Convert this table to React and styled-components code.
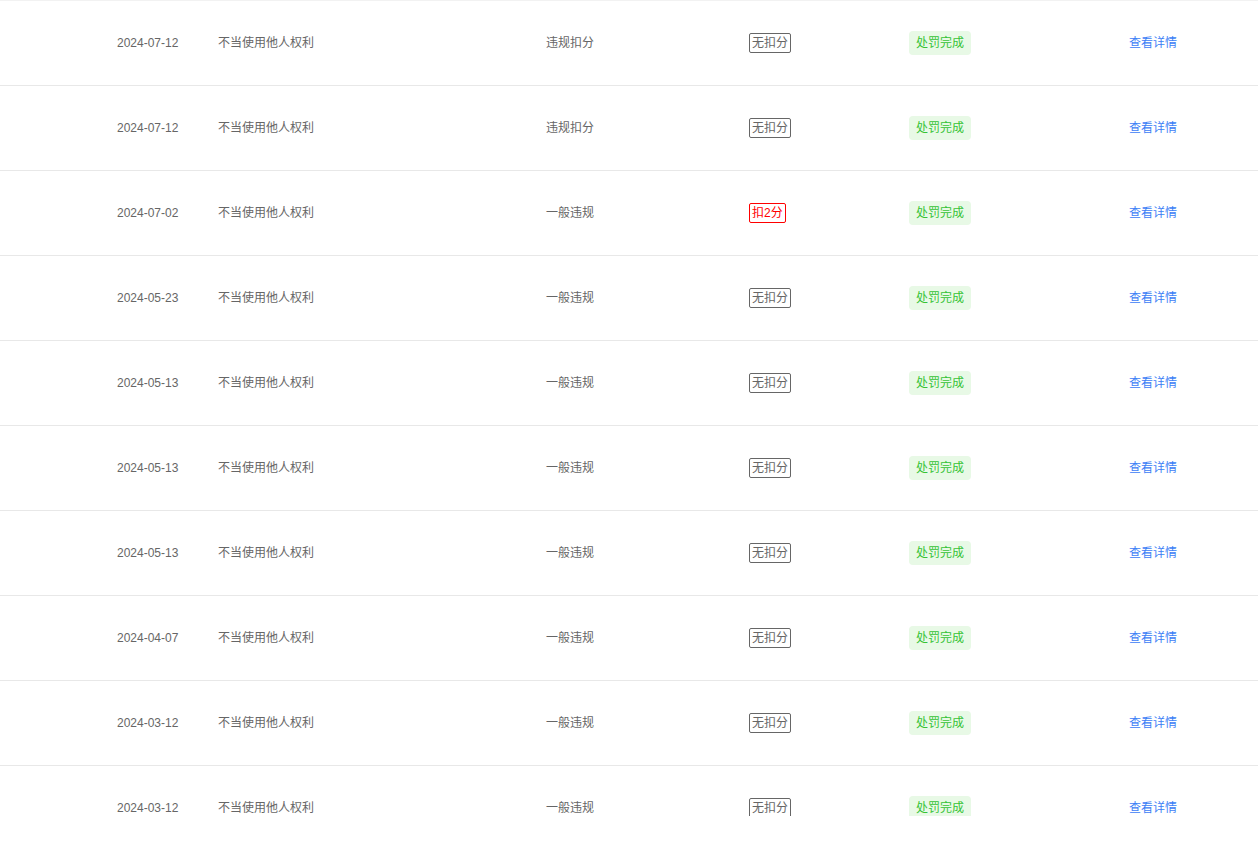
import React from "react";
import styled, { createGlobalStyle } from "styled-components";

const GlobalStyle = createGlobalStyle`
    html, body {
        margin: 0;
        padding: 0;
        background: #fff;
    }
    body {
        font-family: "Liberation Sans", "Noto Sans CJK SC", sans-serif;
        font-size: 12px;
        color: #666;
    }
`;

const records = [
    { date: "2024-07-12", type: "违规扣分", score: "无扣分" },
    { date: "2024-07-12", type: "违规扣分", score: "无扣分" },
    { date: "2024-07-02", type: "一般违规", score: "扣2分", deducted: true },
    { date: "2024-05-23", type: "一般违规", score: "无扣分" },
    { date: "2024-05-13", type: "一般违规", score: "无扣分" },
    { date: "2024-05-13", type: "一般违规", score: "无扣分" },
    { date: "2024-05-13", type: "一般违规", score: "无扣分" },
    { date: "2024-04-07", type: "一般违规", score: "无扣分" },
    { date: "2024-03-12", type: "一般违规", score: "无扣分" },
    { date: "2024-03-12", type: "一般违规", score: "无扣分" },
];

const App = () => {
    return (
        <>
            <GlobalStyle />
            <TableWrapper>
                {records.map((r, i) => (
                    <Row key={i}>
                        <Cell>{r.date}</Cell>
                        <Cell>不当使用他人权利</Cell>
                        <Cell>{r.type}</Cell>
                        <Cell>
                            <ScoreTag $deducted={r.deducted}>{r.score}</ScoreTag>
                        </Cell>
                        <Cell>
                            <StatusTag>处罚完成</StatusTag>
                        </Cell>
                        <Cell>
                            <DetailLink href="#">查看详情</DetailLink>
                        </Cell>
                    </Row>
                ))}
            </TableWrapper>
        </>
    );
};

const TableWrapper = styled.div`
    height: 815px;
    overflow: hidden;
    border-top: 1px solid #f2f2f2;
`;

const Row = styled.div`
    display: grid;
    grid-template-columns: 101px 328px 203px 160px 220px 1fr;
    align-items: center;
    height: 84px;
    padding-left: 117px;
    border-bottom: 1px solid #e8e8e8;
`;

const Cell = styled.div`
    display: flex;
    align-items: center;
    line-height: 20px;
    white-space: nowrap;
`;

const ScoreTag = styled.span`
    display: inline-block;
    padding: 0 2px;
    line-height: 18px;
    border: 1px solid ${(p) => (p.$deducted ? "#ff0000" : "#666")};
    color: ${(p) => (p.$deducted ? "#ff0000" : "#666")};
    border-radius: 2px;
`;

const StatusTag = styled.span`
    display: inline-block;
    padding: 0 7px;
    line-height: 24px;
    background: #e8f9e6;
    color: #35c335;
    border-radius: 4px;
`;

const DetailLink = styled.a`
    color: #3c80f6;
    text-decoration: none;
`;

export default App;
